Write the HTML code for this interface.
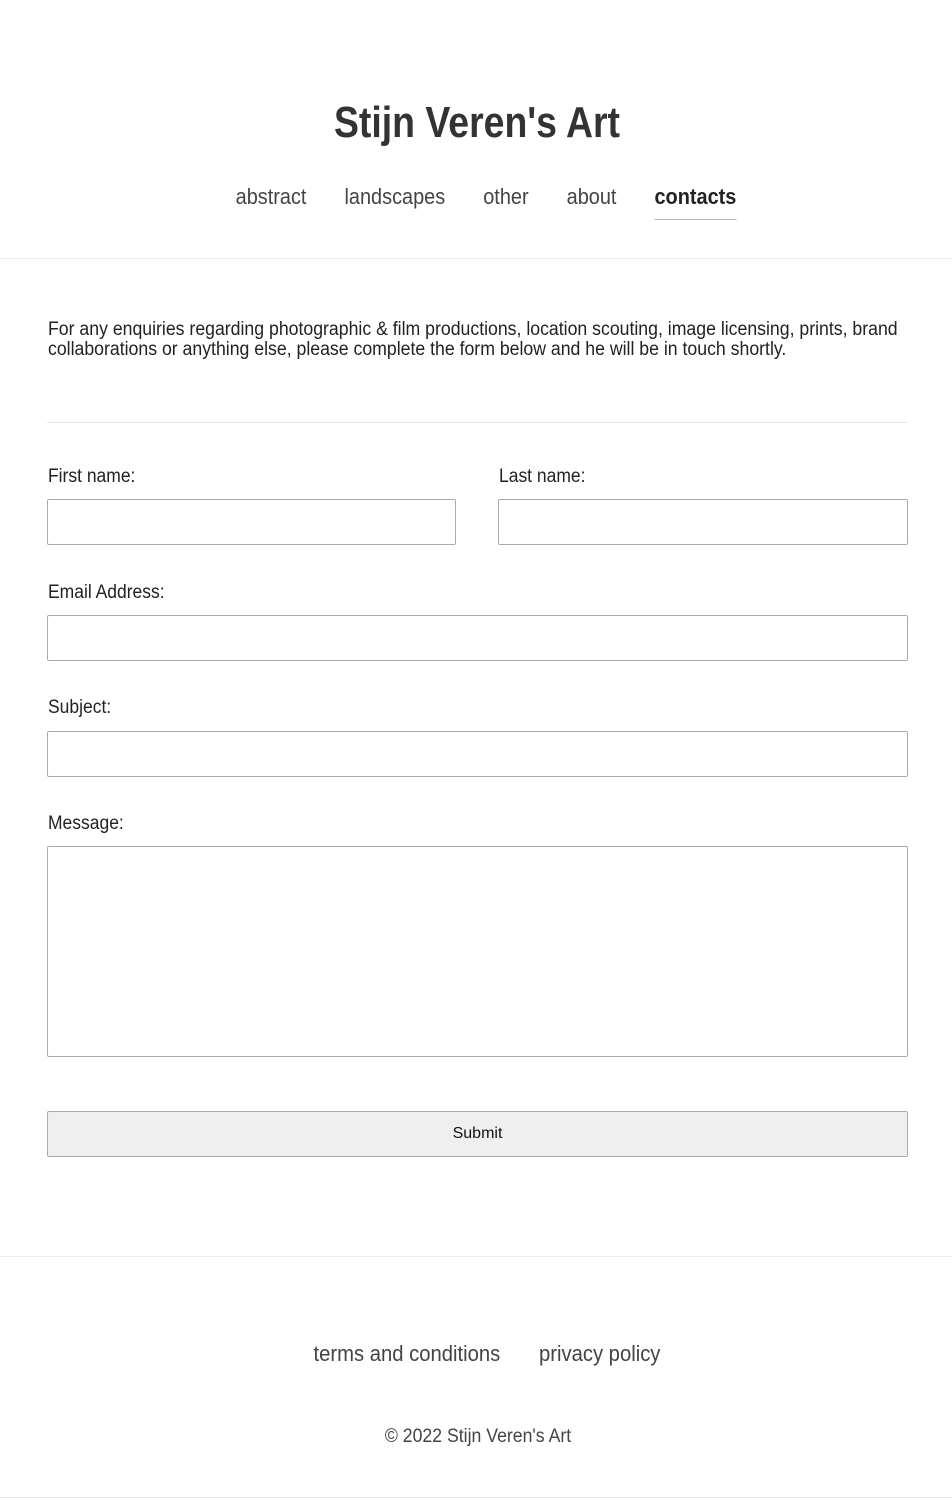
<!DOCTYPE html>
<html><head><meta charset="utf-8">
<style>
*{box-sizing:border-box;margin:0;padding:0}
html,body{width:952px;height:1500px;background:#fff;overflow:hidden}
body{font-family:"Liberation Sans",sans-serif;color:#222;position:relative}
.abs{position:absolute}
h1{position:absolute;top:98px;left:1px;width:952px;text-align:center;font-size:44px;font-weight:bold;color:#333;transform:scaleX(0.85);transform-origin:center}
.nav{position:absolute;top:184px;left:10px;width:952px;text-align:center;font-size:22px;color:#444;transform:scaleX(0.905);transform-origin:center}
.nav span{margin:0 21px;display:inline-block;padding-bottom:9px}
.nav .act{font-weight:bold;color:#222;border-bottom:1px solid #bbb}
.line{position:absolute;left:0;width:952px;height:1px;background:#eee}
p.intro{position:absolute;top:320px;left:48px;width:925px;font-size:19px;line-height:20px;color:#222;transform:scaleX(0.93);transform-origin:left}
label{position:absolute;font-size:19px;color:#222;transform:scaleX(0.92);transform-origin:left;white-space:nowrap}
.inp{position:absolute;border:1px solid #aaa;border-radius:2px;background:#fff}
.btn{position:absolute;left:47px;top:1111px;width:861px;height:46px;border:1px solid #aaa;border-radius:2px;background:#efefef;font-size:16px;text-align:center;line-height:44px;color:#111}
.foot{position:absolute;top:1341px;left:11px;width:952px;text-align:center;font-size:22px;color:#444;transform:scaleX(0.92);transform-origin:center}
.foot span{margin:0 21px}
.copy{position:absolute;top:1426px;left:2px;width:952px;text-align:center;font-size:19px;color:#444;transform:scaleX(0.93);transform-origin:center}
</style></head><body>
<h1>Stijn Veren's Art</h1>
<div class="nav"><span>abstract</span><span>landscapes</span><span>other</span><span>about</span><span class="act">contacts</span></div>
<div class="line" style="top:258px"></div>
<p class="intro">For any enquiries regarding photographic &amp; film productions, location scouting, image licensing, prints, brand collaborations or anything else, please complete the form below and he will be in touch shortly.</p>
<div class="abs" style="top:422px;left:47px;width:861px;height:1px;background:#e6e6e6"></div>
<label style="top:466px;left:48px">First name:</label>
<label style="top:466px;left:499px">Last name:</label>
<div class="inp" style="top:499px;left:47px;width:409px;height:46px"></div>
<div class="inp" style="top:499px;left:498px;width:410px;height:46px"></div>
<label style="top:582px;left:48px">Email Address:</label>
<div class="inp" style="top:615px;left:47px;width:861px;height:46px"></div>
<label style="top:697px;left:48px">Subject:</label>
<div class="inp" style="top:731px;left:47px;width:861px;height:46px"></div>
<label style="top:813px;left:48px">Message:</label>
<div class="inp" style="top:846px;left:47px;width:861px;height:211px"></div>
<div class="btn">Submit</div>
<div class="line" style="top:1256px"></div>
<div class="foot"><span>terms and conditions</span><span>privacy policy</span></div>
<div class="copy">© 2022 Stijn Veren's Art</div>
<div class="line" style="top:1497px;background:#e6e6e6"></div>
</body></html>
